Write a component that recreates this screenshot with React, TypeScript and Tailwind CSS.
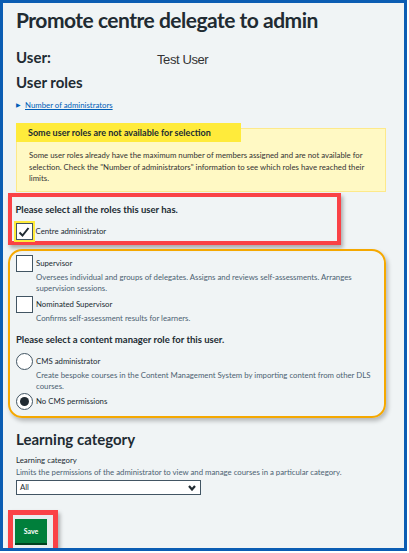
import React from "react";

function CheckBox({ checked, focus }: { checked?: boolean; focus?: boolean }) {
  return (
    <span
      className={`flex h-[17px] w-[17px] shrink-0 items-center justify-center border-[1.5px] border-[#425563] bg-white ${
        focus ? "outline-[2px] outline-[#ffeb3b] outline outline-offset-0" : ""
      }`}
    >
      {checked && (
        <svg width="12" height="12" viewBox="0 0 12 12">
          <path d="M1.5 6.5 L4.5 9.5 L10.5 2" fill="none" stroke="#212b32" strokeWidth="2" />
        </svg>
      )}
    </span>
  );
}

function Radio({ checked }: { checked?: boolean }) {
  return (
    <span className="flex h-[17px] w-[17px] shrink-0 items-center justify-center rounded-full border-[1.5px] border-[#425563] bg-white">
      {checked && <span className="h-[9px] w-[9px] rounded-full bg-[#212b32]" />}
    </span>
  );
}

export default function App() {
  return (
    <div className="h-[553px] w-[409px] bg-white">
      <div className="h-[551px] w-[407px] overflow-hidden border-[3px] border-[#0b5db3] bg-[#f0f4f5] pl-[13px] pr-[18px] font-['Lato',sans-serif] text-[#212b32]">
        <h1 className="pt-[3px] text-[21px] font-bold leading-[28px] tracking-[-0.5px]">
          Promote centre delegate to admin
        </h1>

        <div className="mt-[14px] flex items-start">
          <span className="w-[141px] text-[15px] font-bold leading-[18px]">User:</span>
          <span className="mt-[4px] font-['Liberation_Sans',sans-serif] text-[13px] leading-[16px] tracking-[-0.4px] text-[#333]">
            Test User
          </span>
        </div>

        <h2 className="mt-[5px] text-[15px] font-bold leading-[18px]">User roles</h2>

        <div className="mt-[9px] flex items-center gap-[4px] text-[7.8px] leading-[10px] text-[#005eb8]">
          <span className="text-[6px]">▶</span>
          <span className="underline">Number of administrators</span>
        </div>

        <div className="relative mt-[18px] h-[64px] w-[370px] border border-[#fde98a] bg-[#fff9c4] px-[12px] pt-[21px] text-[7.8px] leading-[11.5px] text-[#333]">
          <div className="absolute left-[-1px] top-[-6px] h-[19px] w-[225px] bg-[#ffeb3b] px-[12px] text-[9px] font-bold leading-[19px] text-[#212b32]">
            Some user roles are not available for selection
          </div>
          Some user roles already have the maximum number of members assigned and are not available for
          <br />
          selection. Check the "Number of administrators" information to see which roles have reached their
          <br />
          limits.
        </div>

        <div className="-ml-[8px] mt-[1px] h-[52px] w-[333px] border-[4.5px] border-[#fa4246] px-[3.5px] pt-[6px] shadow-[2px_3px_4px_rgba(0,0,0,0.3)]">
          <div className="text-[9.5px] font-bold leading-[13px]">Please select all the roles this user has.</div>
          <div className="mt-[7px] flex items-center gap-[3px] text-[7.8px]">
            <CheckBox checked focus />
            <span>Centre administrator</span>
          </div>
        </div>

        <div className="-ml-[8px] mt-[4px] w-[378px] rounded-[14px] border-2 border-[#f5a800] pb-[6px] pl-[6px] pr-[8px] pt-[4px] text-[7.8px] leading-[11px] shadow-[2px_3px_4px_rgba(0,0,0,0.25)]">
          <div className="flex items-center gap-[3px]">
            <CheckBox />
            <span>Supervisor</span>
          </div>
          <div className="pl-[20px] text-[#4c6272]">
            Oversees individual and groups of delegates. Assigns and reviews self-assessments. Arranges
            <br />
            supervision sessions.
          </div>
          <div className="mt-[2px] flex items-center gap-[3px]">
            <CheckBox />
            <span>Nominated Supervisor</span>
          </div>
          <div className="pl-[20px] text-[#4c6272]">Confirms self-assessment results for learners.</div>

          <div className="mt-[9px] text-[9.5px] font-bold leading-[13px]">
            Please select a content manager role for this user.
          </div>

          <div className="mt-[7px] flex items-center gap-[3px]">
            <Radio />
            <span>CMS administrator</span>
          </div>
          <div className="pl-[20px] text-[#4c6272]">
            Create bespoke courses in the Content Management System by importing content from other DLS
            <br />
            courses.
          </div>
          <div className="mt-[1px] flex items-center gap-[3px]">
            <Radio checked />
            <span>No CMS permissions</span>
          </div>
        </div>

        <h2 className="mt-[12px] text-[15px] font-bold leading-[18px]">Learning category</h2>
        <div className="mt-[6px] text-[7.8px] leading-[12px]">Learning category</div>
        <div className="text-[7.8px] leading-[12px] text-[#4c6272]">
          Limits the permissions of the administrator to view and manage courses in a particular category.
        </div>
        <div className="mt-[2px] flex h-[15px] w-[185px] items-center justify-between border border-[#425563] bg-white pl-[3px] pr-[4px] text-[7.8px]">
          <span>All</span>
          <svg width="8" height="6" viewBox="0 0 8 6">
            <path d="M1 1 L4 4.5 L7 1" fill="none" stroke="#212b32" strokeWidth="2.2" />
          </svg>
        </div>

        <div className="-ml-[8px] mt-[15px] h-[45px] w-[50px] border-[5px] border-[#fa4246] bg-[#e8edee] pl-[2px] pt-[4px] shadow-[2px_3px_4px_rgba(0,0,0,0.3)]">
          <div className="flex h-[24px] w-[32px] items-center justify-center bg-[#007f3b] text-[7px] font-bold text-white shadow-[0_2px_0_#00401e]">
            Save
          </div>
        </div>
      </div>
    </div>
  );
}
